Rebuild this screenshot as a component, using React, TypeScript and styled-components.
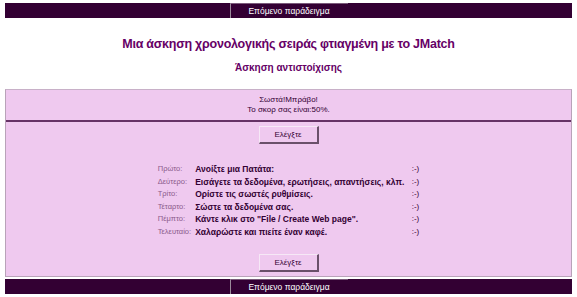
import React from "react";
import styled, { createGlobalStyle } from "styled-components";

const GlobalStyle = createGlobalStyle`
  body {
    margin: 0;
    background: #ffffff;
    font-family: "Liberation Sans", Arial, sans-serif;
  }
`;

const steps = [
  { label: "Πρώτο:", text: "Ανοίξτε μια Πατάτα:" },
  { label: "Δεύτερο:", text: "Εισάγετε τα δεδομένα, ερωτήσεις, απαντήσεις, κλπ." },
  { label: "Τρίτο:", text: "Ορίστε τις σωστές ρυθμίσεις." },
  { label: "Τέταρτο:", text: "Σώστε τα δεδομένα σας." },
  { label: "Πέμπτο:", text: "Κάντε κλικ στο \"File / Create Web page\"." },
  { label: "Τελευταίο:", text: "Χαλαρώστε και πιείτε έναν καφέ." },
];

function NavBar({ top }: { top?: boolean }) {
  return (
    <Nav $top={top}>
      <NavCell>Επόμενο παράδειγμα</NavCell>
    </Nav>
  );
}

export default function App() {
  return (
    <Page>
      <GlobalStyle />
      <NavBar top />
      <Title>Μια άσκηση χρονολογικής σειράς φτιαγμένη με το JMatch</Title>
      <SubTitle>Άσκηση αντιστοίχισης</SubTitle>
      <Panel>
        <Feedback>
          <div>Σωστά!Μπράβο!</div>
          <div>Το σκορ σας είναι:50%.</div>
        </Feedback>
        <ButtonRow>
          <CheckButton>Ελέγξτε</CheckButton>
        </ButtonRow>
        <Steps>
          {steps.map((s) => (
            <StepRow key={s.label}>
              <StepLabel>{s.label}</StepLabel>
              <StepText>{s.text}</StepText>
              <StepMark>:-)</StepMark>
            </StepRow>
          ))}
        </Steps>
        <ButtonRow $bottom>
          <CheckButton>Ελέγξτε</CheckButton>
        </ButtonRow>
      </Panel>
      <NavBar />
    </Page>
  );
}

const Page = styled.div`
  padding: 3px 5px 0 5px;
  display: flex;
  flex-direction: column;
`;

const Nav = styled.div<{ $top?: boolean }>`
  height: 15px;
  background: #330033;
  display: flex;
  justify-content: center;
  margin-top: ${(p) => (p.$top ? "0" : "2px")};
`;

const NavCell = styled.div`
  width: 118px;
  border-left: 1px solid #9a8a9a;
  border-top: 1px solid #7a5a7a;
  box-sizing: border-box;
  color: #ffffff;
  font-size: 8.5px;
  line-height: 14px;
  text-align: center;
`;

const Title = styled.h1`
  margin: 18px 0 0 0;
  font-size: 12.5px;
  letter-spacing: -0.25px;
  line-height: 16px;
  font-weight: bold;
  color: #660066;
  text-align: center;
`;

const SubTitle = styled.h2`
  margin: 9px 0 0 0;
  font-size: 10px;
  line-height: 14px;
  font-weight: bold;
  color: #660066;
  text-align: center;
`;

const Panel = styled.div`
  margin-top: 14px;
  background: #efc9ef;
  border: 1px solid #b9a3b9;
  border-top-color: #c8b0c8;
  display: flex;
  flex-direction: column;
`;

const Feedback = styled.div`
  padding: 5px 0 5px 0;
  border-bottom: 2px solid #663366;
  font-size: 8px;
  line-height: 10px;
  color: #330033;
  text-align: center;
`;

const ButtonRow = styled.div<{ $bottom?: boolean }>`
  display: flex;
  justify-content: center;
  padding: ${(p) => (p.$bottom ? "15px 0 4px 0" : "4px 0 0 0")};
`;

const CheckButton = styled.button`
  width: 60px;
  height: 18px;
  background: #efc9ef;
  border-style: solid;
  border-width: 1px 2px 2px 1px;
  border-color: #f6e8f6 #6a506a #6a506a #f6e8f6;
  font-family: "Liberation Sans", Arial, sans-serif;
  font-size: 8px;
  color: #330033;
  padding: 0;
`;

const Steps = styled.div`
  display: grid;
  grid-template-columns: max-content max-content 12px;
  justify-content: center;
  margin-top: 19px;
`;

const StepRow = styled.div`
  display: contents;
`;

const StepLabel = styled.div`
  font-size: 7.5px;
  line-height: 12.6px;
  color: #8a5a8a;
  padding-right: 4px;
`;

const StepText = styled.div`
  font-size: 8.5px;
  line-height: 12.6px;
  font-weight: bold;
  color: #330033;
  padding-right: 3px;
`;

const StepMark = styled.div`
  font-size: 8px;
  line-height: 12.6px;
  color: #330033;
  text-align: right;
`;
